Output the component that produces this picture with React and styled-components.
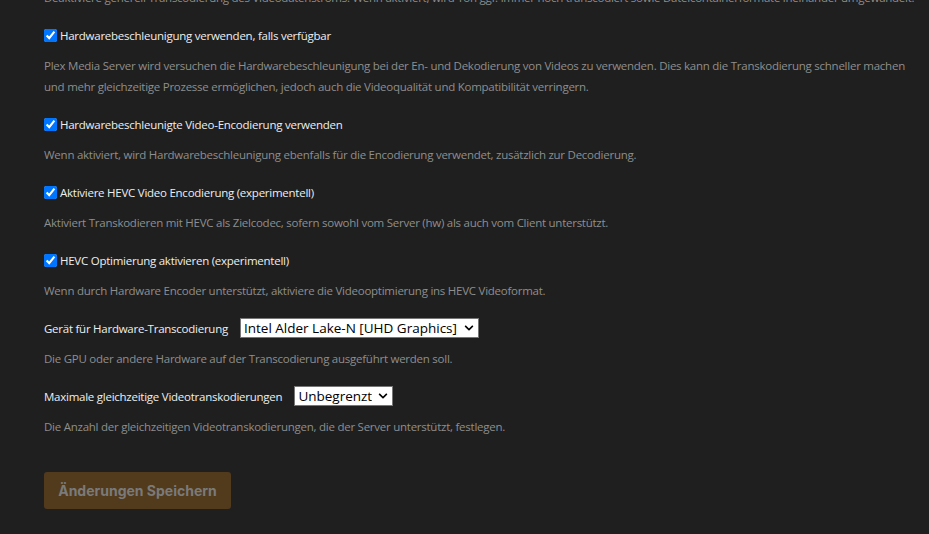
import { useState } from 'react'
import styled, { createGlobalStyle } from 'styled-components'
import { FaChevronDown } from 'react-icons/fa'

const GlobalStyle = createGlobalStyle`
  html, body {
    margin: 0;
    padding: 0;
    background: #1f1f1f;
  }
  body {
    font-family: "Open Sans", "Liberation Sans", sans-serif;
  }
`

const settings = [
  {
    id: 'hwAccel',
    label: 'Hardwarebeschleunigung verwenden, falls verfügbar',
    desc: 'Plex Media Server wird versuchen die Hardwarebeschleunigung bei der En- und Dekodierung von Videos zu verwenden. Dies kann die Transkodierung schneller machen und mehr gleichzeitige Prozesse ermöglichen, jedoch auch die Videoqualität und Kompatibilität verringern.',
  },
  {
    id: 'hwEncode',
    label: 'Hardwarebeschleunigte Video-Encodierung verwenden',
    desc: 'Wenn aktiviert, wird Hardwarebeschleunigung ebenfalls für die Encodierung verwendet, zusätzlich zur Decodierung.',
  },
  {
    id: 'hevcEncode',
    label: 'Aktiviere HEVC Video Encodierung (experimentell)',
    desc: 'Aktiviert Transkodieren mit HEVC als Zielcodec, sofern sowohl vom Server (hw) als auch vom Client unterstützt.',
  },
  {
    id: 'hevcOpt',
    label: 'HEVC Optimierung aktivieren (experimentell)',
    desc: 'Wenn durch Hardware Encoder unterstützt, aktiviere die Videooptimierung ins HEVC Videoformat.',
  },
]

function App() {
  const [checked, setChecked] = useState({
    hwAccel: true,
    hwEncode: true,
    hevcEncode: true,
    hevcOpt: true,
  })

  const toggle = (id) => setChecked({ ...checked, [id]: !checked[id] })

  return (
    <>
      <GlobalStyle />
      <Viewport>
        <Form>
          <Description $cut>
            Deaktiviere generell Transcodierung des Videodatenstroms. Wenn aktiviert, wird Ton ggf. immer noch transcodiert sowie Dateicontainerformate ineinander umgewandelt.
          </Description>

          {settings.map((s) => (
            <Group key={s.id}>
              <CheckLabel>
                <Checkbox type="checkbox" checked={checked[s.id]} onChange={() => toggle(s.id)} />
                {s.label}
              </CheckLabel>
              <Description>{s.desc}</Description>
            </Group>
          ))}

          <Group>
            <SelectRow>
              <FieldLabel>Gerät für Hardware-Transcodierung</FieldLabel>
              <SelectWrap>
                <Select defaultValue="intel">
                  <option value="auto">Automatisch</option>
                  <option value="intel">Intel Alder Lake-N [UHD Graphics]</option>
                </Select>
                <Chevron><FaChevronDown /></Chevron>
              </SelectWrap>
            </SelectRow>
            <Description>Die GPU oder andere Hardware auf der Transcodierung ausgeführt werden soll.</Description>
          </Group>

          <Group>
            <SelectRow>
              <FieldLabel>Maximale gleichzeitige Videotranskodierungen</FieldLabel>
              <SelectWrap>
                <Select defaultValue="0">
                  <option value="0">Unbegrenzt</option>
                  <option value="1">1</option>
                  <option value="2">2</option>
                </Select>
                <Chevron><FaChevronDown /></Chevron>
              </SelectWrap>
            </SelectRow>
            <Description>Die Anzahl der gleichzeitigen Videotranskodierungen, die der Server unterstützt, festlegen.</Description>
          </Group>

          <SaveButton disabled>Änderungen Speichern</SaveButton>
        </Form>
      </Viewport>
    </>
  )
}

const Viewport = styled.div`
  height: 534px;
  overflow: hidden;
  background: #1f1f1f;
`

const Form = styled.div`
  margin-top: -13px;
  padding: 0 4px 0 44px;
  display: flex;
  flex-direction: column;
  align-items: flex-start;
  font-size: 11.5px;
  letter-spacing: -0.25px;
`

const Group = styled.div`
  margin-top: 17px;
  display: flex;
  flex-direction: column;
`

const CheckLabel = styled.label`
  display: flex;
  align-items: center;
  height: 20px;
  color: #eeeeee;
  cursor: pointer;
`

const Checkbox = styled.input`
  width: 13px;
  height: 13px;
  margin: 0 3px 0 0;
  accent-color: #0075ff;
`

const Description = styled.p`
  margin: ${(p) => (p.$cut ? '0' : '10px 0 0')};
  line-height: 21px;
  color: #8e8e8e;
  white-space: ${(p) => (p.$cut ? 'nowrap' : 'normal')};
`

const SelectRow = styled.div`
  display: flex;
  align-items: center;
  gap: 12px;
  height: 20px;
`

const FieldLabel = styled.span`
  color: #eeeeee;
`

const SelectWrap = styled.div`
  position: relative;
  display: flex;
`

const Select = styled.select`
  appearance: none;
  height: 20px;
  padding: 0 20px 0 3px;
  border: 1px solid #767676;
  border-radius: 0;
  background: #ffffff;
  color: #000000;
  font-family: "Open Sans", "Liberation Sans", sans-serif;
  font-size: 13.5px;
  letter-spacing: 0;
  line-height: 18px;
`

const Chevron = styled.span`
  position: absolute;
  right: 5px;
  top: 5px;
  font-size: 10px;
  color: #000;
  pointer-events: none;
  display: flex;
`

const SaveButton = styled.button`
  margin-top: 35px;
  width: 187px;
  height: 37px;
  border: none;
  border-radius: 3px;
  background: #523a1d;
  color: #7a7a7a;
  font-family: Inter, "Open Sans", sans-serif;
  font-weight: 700;
  font-size: 14px;
  letter-spacing: 0;
  cursor: default;
`

export default App
